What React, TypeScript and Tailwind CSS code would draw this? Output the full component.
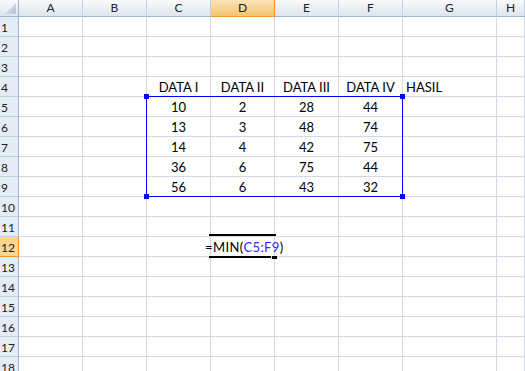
const cols = ["A", "B", "C", "D", "E", "F", "G", "H"];

const data: Record<number, string[]> = {
  5: ["10", "2", "28", "44"],
  6: ["13", "3", "48", "74"],
  7: ["14", "4", "42", "75"],
  8: ["36", "6", "75", "44"],
  9: ["56", "6", "43", "32"],
};

function ColHeader({ label }: { label: string }) {
  const active = label === "D";
  return (
    <div
      className={
        active
          ? "flex items-center justify-center border-r border-b border-[#f29436] bg-gradient-to-b from-[#fae3b8] to-[#f2c56a] text-[12px] leading-none text-[#222]"
          : "flex items-center justify-center border-r border-b border-r-[#c3d0e0] border-b-[#9eb6ce] bg-gradient-to-b from-[#f9fafc] to-[#dee5ef] text-[12px] leading-none text-[#222]"
      }
    >
      {label}
    </div>
  );
}

function RowHeader({ n }: { n: number }) {
  const active = n === 12;
  return (
    <div
      className={
        active
          ? "flex items-end border-r border-b border-[#f29436] bg-[#fcd690] pl-[1px] pb-[2px] text-[12px] leading-none text-[#222]"
          : "flex items-end border-r border-b border-r-[#9eb6ce] border-b-[#c3d0e0] bg-[#e4ecf7] pl-[1px] pb-[2px] text-[12px] leading-none text-[#222]"
      }
    >
      {n}
    </div>
  );
}

function Cell({ children, align = "center" }: { children?: React.ReactNode; align?: "center" | "left" }) {
  return (
    <div
      className={
        "flex items-end whitespace-nowrap border-r border-b border-[#d0d7e5] pb-px text-[13px] leading-[15px] text-black " +
        (align === "center" ? "justify-center" : "justify-start pl-[3px]")
      }
    >
      {children}
    </div>
  );
}

// cell being edited: thick top/bottom edges + fill handle
function EditCell() {
  return (
    <div className="relative flex items-end whitespace-nowrap border-r border-b border-[#d0d7e5] pb-px text-[13px] leading-[15px] text-black">
      <span className="-ml-[6px] tracking-[0.4px]">
        =MIN(<span className="text-[#2b2bff]">C5:F9</span>)
      </span>
      <div className="absolute -left-[2px] -top-[3px] h-[2px] w-[67px] bg-black" />
      <div className="absolute -left-[2px] -bottom-[2px] h-[2px] w-[62px] bg-black" />
      <div className="absolute left-[61px] -bottom-[3px] h-[3px] w-[5px] bg-black" />
    </div>
  );
}

function Row({ n }: { n: number }) {
  let cells: React.ReactNode[] = cols.map((c) => <Cell key={c} />);
  if (n === 4) {
    cells = [
      <Cell key="A" />,
      <Cell key="B" />,
      <Cell key="C">DATA I</Cell>,
      <Cell key="D">DATA II</Cell>,
      <Cell key="E">DATA III</Cell>,
      <Cell key="F">DATA IV</Cell>,
      <Cell key="G" align="left">HASIL</Cell>,
      <Cell key="H" />,
    ];
  } else if (data[n]) {
    cells = [
      <Cell key="A" />,
      <Cell key="B" />,
      ...data[n].map((v, i) => <Cell key={i}>{v}</Cell>),
      <Cell key="G" />,
      <Cell key="H" />,
    ];
  } else if (n === 12) {
    cells = [
      <Cell key="A" />,
      <Cell key="B" />,
      <Cell key="C" />,
      <EditCell key="D" />,
      <Cell key="E" />,
      <Cell key="F" />,
      <Cell key="G" />,
      <Cell key="H" />,
    ];
  }
  return (
    <>
      <RowHeader n={n} />
      {cells}
    </>
  );
}

export default function App() {
  const rows = Array.from({ length: 18 }, (_, i) => i + 1);
  return (
    <main className="relative h-[371px] w-[525px] overflow-hidden bg-white font-['Lato',_'Liberation_Sans',_sans-serif]">
      <div className="grid grid-cols-[19px_repeat(6,64px)_94px_1fr] grid-rows-[17px_repeat(18,20px)]">
        <div className="relative border-r border-b border-r-[#9eb6ce] border-b-[#9eb6ce] bg-gradient-to-b from-[#f9fafc] to-[#dee5ef]">
          <svg width="18" height="16" className="absolute left-0 top-0">
            <defs>
              <linearGradient id="tri" x1="0" y1="0" x2="1" y2="1">
                <stop offset="0" stopColor="#e6ebf2" />
                <stop offset="1" stopColor="#b4c1d2" />
              </linearGradient>
            </defs>
            <polygon points="5,14 16,3 16,14" fill="url(#tri)" />
          </svg>
        </div>
        {cols.map((c) => (
          <ColHeader key={c} label={c} />
        ))}
        {rows.map((n) => (
          <Row key={n} n={n} />
        ))}
      </div>

      {/* range reference box C5:F9 */}
      <div className="absolute left-[146px] top-[96px] h-[101px] w-[257px] border border-[#0000ff]">
        <div className="absolute -left-[3px] -top-[3px] h-[5px] w-[5px] bg-[#0000ff]" />
        <div className="absolute -right-[3px] -top-[3px] h-[5px] w-[5px] bg-[#0000ff]" />
        <div className="absolute -left-[3px] -bottom-[3px] h-[5px] w-[5px] bg-[#0000ff]" />
        <div className="absolute -right-[3px] -bottom-[3px] h-[5px] w-[5px] bg-[#0000ff]" />
      </div>
    </main>
  );
}
